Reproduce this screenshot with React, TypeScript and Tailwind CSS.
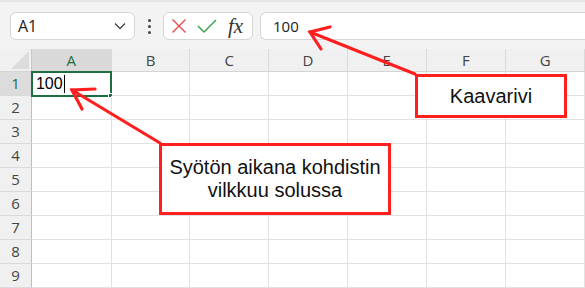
import React from 'react';

const cols = [
  { id: 'A', w: 'w-[80px]' },
  { id: 'B', w: 'w-[79px]' },
  { id: 'C', w: 'w-[79px]' },
  { id: 'D', w: 'w-[79px]' },
  { id: 'E', w: 'w-[79px]' },
  { id: 'F', w: 'w-[80px]' },
  { id: 'G', w: 'w-[79px]' },
];
const rows = [1, 2, 3, 4, 5, 6, 7, 8, 9];

const App: React.FC = () => {
  return (
    <div className="relative w-[585px] h-[288px] overflow-hidden bg-white font-['Open_Sans',sans-serif]">
      {/* Formula bar */}
      <div className="h-[49px] bg-[#f3f3f3] border-t-[2px] border-[#e6e6e6] flex items-start pt-[10px] pl-[10px] gap-[7px]">
        <div className="w-[125px] h-[28px] bg-white border border-[#d6d6d6] rounded-md flex items-center justify-between pl-[7px] pr-[8px]">
          <span className="text-[16px] text-[#222] leading-none">A1</span>
          <svg width="12" height="8" viewBox="0 0 12 8">
            <path d="M1 1.5 L6 6.5 L11 1.5" fill="none" stroke="#444" strokeWidth="1.3" />
          </svg>
        </div>
        <div className="w-[14px] h-[28px] flex flex-col items-center justify-center gap-[3px]">
          <span className="w-[3px] h-[3px] bg-[#444] rounded-full" />
          <span className="w-[3px] h-[3px] bg-[#444] rounded-full" />
          <span className="w-[3px] h-[3px] bg-[#444] rounded-full" />
        </div>
        <div className="w-[90px] h-[28px] bg-white border border-[#d6d6d6] rounded-md flex items-center pl-[7px] gap-[10px]">
          <svg width="16" height="16" viewBox="0 0 16 16">
            <path d="M1.5 1.5 L14.5 14.5 M14.5 1.5 L1.5 14.5" fill="none" stroke="#e5484d" strokeWidth="1.4" />
          </svg>
          <svg width="20" height="16" viewBox="0 0 20 16">
            <path d="M1 8 L7 14 L19 2" fill="none" stroke="#3aa651" strokeWidth="1.5" />
          </svg>
          <span className="ml-[1px] text-[21px] italic text-[#333] leading-none font-['Liberation_Serif',serif]">fx</span>
        </div>
        <div className="flex-1 h-[28px] bg-white border border-[#d6d6d6] border-r-0 rounded-l-md flex items-center pl-[12px]">
          <span className="text-[15px] text-[#222] leading-none">100</span>
        </div>
      </div>

      {/* Grid */}
      <div className="flex flex-col">
        <div className="flex h-[23px] bg-[#f0f0f0] border-b border-[#d4d4d4]">
          <div className="w-[32px] h-full border-r border-[#c8c8c8] relative overflow-hidden">
            <div className="absolute right-[2px] bottom-[2px] w-0 h-0 border-l-[18px] border-l-transparent border-b-[18px] border-b-[#dcdcdc]" />
          </div>
          {cols.map((c) => (
            <div
              key={c.id}
              className={`${c.w} h-full flex items-center justify-center border-r border-[#dadada] text-[15px] ${
                c.id === 'A' ? 'bg-[#d9d9d9] text-[#1e6e42]' : 'text-[#444]'
              }`}
            >
              {c.id}
            </div>
          ))}
        </div>
        {rows.map((r) => (
          <div key={r} className="flex h-[24px] shrink-0">
            <div
              className={`w-[32px] h-full flex items-center justify-center border-r border-[#bdbdbd] border-b border-b-[#dadada] text-[15px] ${
                r === 1 ? 'bg-[#dcdcdc] text-[#1e6e42]' : 'bg-[#f0f0f0] text-[#444]'
              }`}
            >
              {r}
            </div>
            {cols.map((c) => (
              <div key={c.id} className={`${c.w} h-full border-r border-b border-[#e1e1e1] relative`}>
                {r === 1 && c.id === 'A' && (
                  <div className="absolute -left-[1px] -top-[1px] w-[81px] h-[26px] border-2 border-[#1e6e42] flex items-center pl-[3px]">
                    <span className="text-[16px] leading-none text-black font-['Liberation_Sans',sans-serif]">100</span>
                    <span className="w-px h-[18px] bg-black ml-px" />
                    <span className="absolute -right-[3px] -bottom-[3px] w-[5px] h-[5px] bg-[#1e6e42] border border-white" />
                  </div>
                )}
              </div>
            ))}
          </div>
        ))}
      </div>

      {/* Annotations */}
      <svg className="absolute inset-0 pointer-events-none" width="585" height="288">
        <g stroke="#ff1f1f" strokeWidth="3.2" strokeLinecap="round" fill="none">
          <path d="M415 74 L310 32" />
          <path d="M330 27 L310 32 L321 49" />
          <path d="M160 143 L72 90" />
          <path d="M95 89 L72 90 L82 109" />
        </g>
      </svg>
      <div className="absolute left-[415px] top-[74px] w-[152px] h-[44px] bg-white border-[3px] border-[#ff1f1f] flex items-center justify-center">
        <span className="text-[20px] text-[#111] font-['Liberation_Sans',sans-serif]">Kaavarivi</span>
      </div>
      <div className="absolute left-[159px] top-[143px] w-[232px] h-[72px] bg-white border-[3px] border-[#ff1f1f] flex items-center justify-center">
        <p className="text-[20px] leading-[23px] text-center text-[#111] font-['Liberation_Sans',sans-serif]">
          Syötön aikana kohdistin
          <br />
          vilkkuu solussa
        </p>
      </div>
    </div>
  );
};

export default App;
